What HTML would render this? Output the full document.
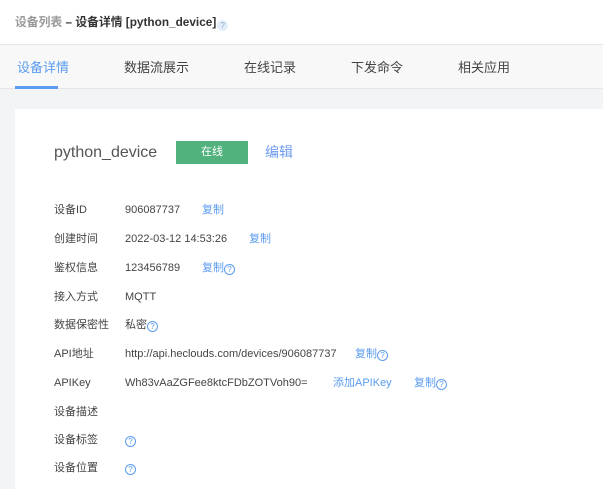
<!DOCTYPE html>
<html><head><meta charset="utf-8"><style>
*{margin:0;padding:0;box-sizing:border-box}
body{width:603px;height:481px;overflow:hidden;background:#f3f4f5;font-family:"Liberation Sans","Noto Sans CJK SC",sans-serif;position:relative}
.hdr{position:absolute;left:0;top:0;width:603px;height:45px;background:#fff;border-bottom:1px solid #e8e8e8}
.hdr .t{position:absolute;left:15px;top:14px;line-height:16px;font-size:11.8px;font-weight:bold;color:#333;white-space:nowrap}
.hdr .t .g{color:#999}
.tabs{position:absolute;left:0;top:45px;width:603px;height:44px;background:#f8f8f8;border-bottom:1px solid #e6e6e6}
.tab{position:absolute;top:14px;line-height:18px;font-size:13px;color:#444;white-space:nowrap}
.tab.on{color:#5b9bf0}
.ul{position:absolute;left:15px;top:41px;width:43px;height:3px;background:#5b9bf0}
.card{position:absolute;left:15px;top:109px;width:600px;height:380px;background:#fff}
.a{position:absolute;white-space:nowrap;line-height:14px}
.lb{font-size:11px;color:#444}
.v{font-size:11px;color:#444}
.lk{font-size:11px;color:#5b9bf0}
.q{display:inline-block;width:11px;height:11px;border:1px solid #5b9bf0;border-radius:50%;font-size:8px;line-height:9px;text-align:center;color:#5b9bf0;vertical-align:-1px}
</style></head><body>
<div class="hdr"><div class="t"><span class="g">设备列表</span> – 设备详情 [python_device]<span style="display:inline-block;width:11px;height:11px;border-radius:50%;background:#e3edfb;color:#8ab;font-size:8px;line-height:11px;text-align:center;font-weight:normal;vertical-align:-2px;margin-left:1px">?</span></div></div>
<div class="tabs">
<div class="tab on" style="left:17px">设备详情</div>
<div class="tab" style="left:124px">数据流展示</div>
<div class="tab" style="left:244px">在线记录</div>
<div class="tab" style="left:351px">下发命令</div>
<div class="tab" style="left:458px">相关应用</div>
<div class="ul"></div>
</div>
<div class="card"></div>
<div class="a" style="left:54px;top:143px;line-height:20px;font-size:16px;color:#555">python_device</div>
<div class="a" style="left:176px;top:141px;width:72px;height:23px;background:#52b27e;color:#fff;font-size:11px;line-height:23px;text-align:center">在线</div>
<div class="a" style="left:265px;top:142px;line-height:20px;font-size:14px;color:#6e9cf0">编辑</div>

<div class="a lb" style="left:54px;top:203px">设备ID</div><div class="a v" style="left:125px;top:203px">906087737</div><div class="a lk" style="left:202px;top:203px">复制</div>
<div class="a lb" style="left:54px;top:232px">创建时间</div><div class="a v" style="left:125px;top:232px">2022-03-12 14:53:26</div><div class="a lk" style="left:249px;top:232px">复制</div>
<div class="a lb" style="left:54px;top:261px">鉴权信息</div><div class="a v" style="left:125px;top:261px">123456789</div><div class="a lk" style="left:202px;top:261px">复制<span class="q">?</span></div>
<div class="a lb" style="left:54px;top:290px">接入方式</div><div class="a v" style="left:125px;top:290px">MQTT</div>
<div class="a lb" style="left:54px;top:318px">数据保密性</div><div class="a v" style="left:125px;top:318px">私密<span class="q">?</span></div>
<div class="a lb" style="left:54px;top:347px">API地址</div><div class="a v" style="left:125px;top:347px">http://api.heclouds.com/devices/906087737</div><div class="a lk" style="left:355px;top:347px">复制<span class="q">?</span></div>
<div class="a lb" style="left:54px;top:376px">APIKey</div><div class="a v" style="left:125px;top:376px">Wh83vAaZGFee8ktcFDbZOTVoh90=</div><div class="a lk" style="left:333px;top:376px">添加APIKey</div><div class="a lk" style="left:414px;top:376px">复制<span class="q">?</span></div>
<div class="a lb" style="left:54px;top:405px">设备描述</div>
<div class="a lb" style="left:54px;top:433px">设备标签</div><div class="a lk" style="left:125px;top:433px"><span class="q">?</span></div>
<div class="a lb" style="left:54px;top:461px">设备位置</div><div class="a lk" style="left:125px;top:461px"><span class="q">?</span></div>
</body></html>
